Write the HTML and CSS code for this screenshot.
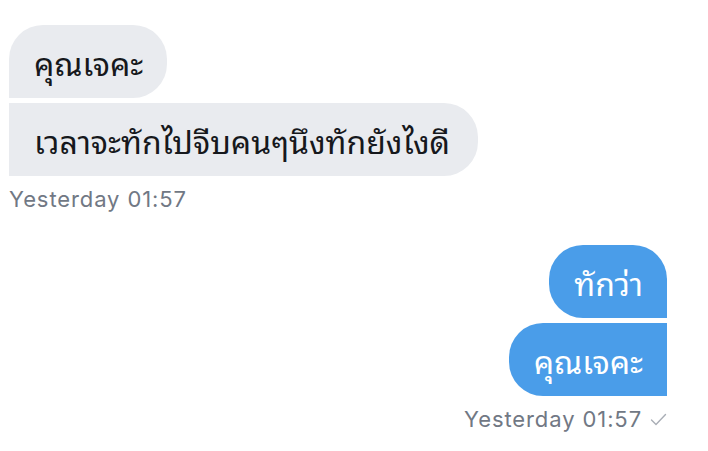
FILE: index.html
```html
<!DOCTYPE html>
<html lang="th">
<head>
<meta charset="utf-8">
<link rel="stylesheet" href="styles.css">
</head>
<body>
<div class="chat">
  <div class="group received">
    <div class="bubble first">คุณเจคะ</div>
    <div class="bubble last">เวลาจะทักไปจีบคนๆนึงทักยังไงดี</div>
    <div class="meta">Yesterday 01:57</div>
  </div>
  <div class="group sent">
    <div class="bubble first">ทักว่า</div>
    <div class="bubble last">คุณเจคะ</div>
    <div class="meta">Yesterday 01:57 <svg class="check" width="17" height="13" viewBox="0 0 17 13"><path d="M1.5 7 L6 11.5 L15.5 1.5" fill="none" stroke="#a9aeb6" stroke-width="1.4" stroke-linecap="round" stroke-linejoin="round"/></svg></div>
  </div>
</div>
</body>
</html>
```
FILE: styles.css
```css
html, body {
  margin: 0;
  padding: 0;
  background: #ffffff;
}
.chat {
  display: flex;
  flex-direction: column;
  padding: 25px 41px 0 9px;
  gap: 33px;
  font-family: "Noto Sans Thai Looped", "Loma", "Garuda", "Waree", "Noto Sans Thai", "Noto Sans", sans-serif;
}
.group {
  display: flex;
  flex-direction: column;
  gap: 5px;
}
.received { align-items: flex-start; }
.sent { align-items: flex-end; }
.bubble {
  font-size: 32px;
  line-height: 37px;
  height: 37px;
  padding: 18px 28px 18px 25px;
  border-radius: 34px;
  white-space: nowrap;
}
.received .first { padding-right: 24px; }
.sent .bubble { padding-right: 24px; }
.received .bubble {
  background: #e9ebef;
  color: #16181c;
}
.sent .bubble {
  background: #4a9de9;
  color: #ffffff;
}
.received .first { border-bottom-left-radius: 0; }
.received .last { border-top-left-radius: 0; border-bottom-left-radius: 0; }
.sent .first { border-bottom-right-radius: 0; }
.sent .last { border-top-right-radius: 0; border-bottom-right-radius: 0; }
.meta {
  font-family: Inter, "Liberation Sans", sans-serif;
  font-size: 22px;
  letter-spacing: 0.9px;
  color: #717884;
  margin-top: 5px;
  display: flex;
  align-items: center;
  gap: 8px;
}
.check { display: block; }
```
